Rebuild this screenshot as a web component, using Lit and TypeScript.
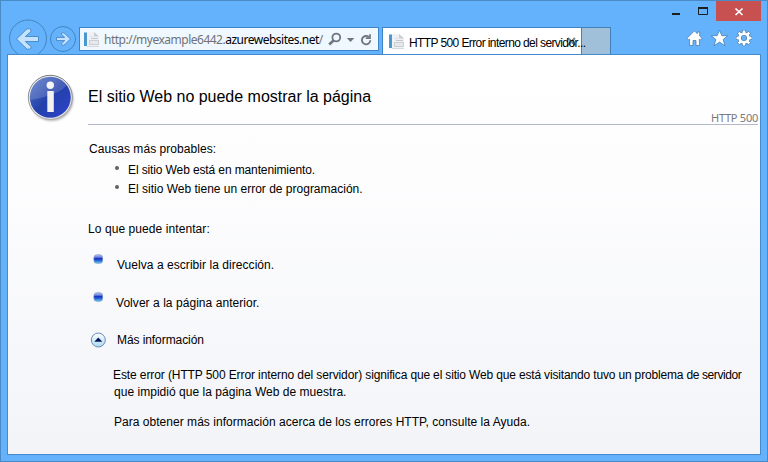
import { LitElement, html, css, svg } from "lit";
import { customElement } from "lit/decorators.js";

const pageIcon = html`<svg class="page-icon" width="17" height="17" viewBox="0 0 17 17">
  <path d="M1 1h10.500l4.500 4v10.500H1z" fill="#f0f1f4"/>
  <path d="M11 1v4.500h5z" fill="#c9ccd1"/>
  <rect x="1" y="1.500" width="3" height="13.500" fill="#4a98cf"/>
  <path d="M7 5.500h3" stroke="#dcdfe3"/>
  <path d="M8 7.500h7" stroke="#c3c6cb"/>
  <rect x="6.500" y="9.500" width="9" height="4" fill="#e6e8eb" stroke="#cbced3"/>
  <path d="M4 15.500h12" stroke="#d5d8dc"/>
</svg>`;

const gearTeeth = [0, 45, 90, 135, 180, 225, 270, 315];

@customElement("app-root")
export class AppRoot extends LitElement {
  static styles = css`
    :host { display: block; }
    * { box-sizing: border-box; }
    svg { display: block; flex: none; }
    .window {
      width: 768px; height: 462px; background: #65b2fc; border: 1px solid #4b8bc5;
      display: flex; flex-direction: column; overflow: hidden;
      font: 12px/16px "Liberation Sans", Arial, sans-serif; color: #000;
    }
    .titlebar { height: 20px; display: flex; justify-content: flex-end; flex: none; margin-right: 6px; }
    .close { width: 45px; height: 20px; background: #c75050; }
    .toolbar { height: 33px; flex: none; display: flex; padding-left: 7px; }
    .nav { margin-top: -2px; height: 35px; overflow: hidden; }
    .address {
      width: 300px; height: 24px; margin: 6px 0 0 1px; border: 1px solid #3d83c5; background: #eff7ff;
      display: flex; align-items: center; color: #6f7379; white-space: nowrap;
      font: 12px/16px "Noto Sans", "Open Sans", sans-serif;
    }
    .address .page-icon { margin-left: 3px; }
    .url { width: 219px; margin-left: 4px; padding-top: 2px; letter-spacing: -0.5px; }
    .url b { font-weight: 400; color: #000; }
    .tab {
      width: 200px; height: 27px; margin: 6px 0 0 3px; background: #fff; border: 1px solid #3d83c5; border-bottom: 0;
      display: flex; padding: 5px 0 0 5px; position: relative; z-index: 1;
    }
    .tab-title { position: absolute; left: 26px; top: 7px; white-space: nowrap; letter-spacing: -0.6px; }
    .tab-x { position: absolute; left: 184px; top: 9px; }
    .newtab { width: 29px; height: 27px; margin-top: 6px; background: #a0bfd9; border: 1px solid #4380b7; border-left: 0; border-bottom: 0; }
    .tools { display: flex; gap: 8px; margin: 8px 0 0 75px; }
    .page {
      margin: 0 6px 6px; width: 754px; height: 401px; border: 1px solid #438bcc; flex: none;
      background: linear-gradient(#fff 0, #fdfdfe 30%, #f3f4f8 100%);
      display: grid; grid-template-columns: 80px 1fr;
    }
    .info { padding: 17px 0 0 17px; }
    .headline { height: 70px; width: 670px; border-bottom: 1px solid #b4b9c9; display: flex; justify-content: space-between; }
    h1 { font-size: 16px; line-height: 20px; font-weight: 400; margin: 32px 0 0; letter-spacing: -0.01px; }
    .code { font: 11px/14px "Noto Sans", sans-serif; color: #77797c; margin-top: 56px; letter-spacing: -0.25px; }
    p, ul { margin: 0; padding: 0; white-space: nowrap; }
    .causes-title { margin: 16px 0 0 1px; letter-spacing: 0.05px; }
    .causes { list-style: none; margin-top: 3px; }
    .causes li { height: 19px; display: flex; align-items: center; padding-left: 27px; }
    .causes li::before { content: ""; width: 4px; height: 4px; margin: 0 9px 4px 0; border-radius: 2px; background: #626262; }
    .c0 { letter-spacing: -0.12px; }
    .try-title { margin-top: 23px; letter-spacing: 0.08px; }
    .row { display: flex; white-space: nowrap; height: 38px; }
    .rows { margin-top: 20px; }
    .row svg { margin: -3px 0 0 5px; }
    .row span { margin-left: 14px; letter-spacing: 0.05px; }
    .row + .row:not(.more) span { margin-left: 13px; }
    .row.more { height: 19px; margin-top: -1px; }
    .row.more svg { margin: 0 0 0 2px; }
    .row.more span { margin-left: 11px; letter-spacing: -0.08px; }
    .detail { margin: 16px 0 0 25px; line-height: 17px; }
    .d1 { letter-spacing: -0.1px; }
    .d1b { letter-spacing: -0.16px; }
    .d1c { letter-spacing: -0.42px; }
    .d2 { margin-left: 1px; letter-spacing: 0.03px; }
    .help { margin: 13px 0 0 26px; letter-spacing: 0.03px; }
  `;

  render() {
    return html`<div class="window">
      <div class="titlebar">
        <svg width="35" height="20" viewBox="0 0 35 20"><path d="M9 13h8" stroke="#1e1e1e" stroke-width="2"/></svg>
        <svg width="18" height="20" viewBox="0 0 18 20"><path d="M0.500 7v6.500h9V7" fill="none" stroke="#1e1e1e"/><path d="M0 7h10" stroke="#1e1e1e" stroke-width="2"/></svg>
        <svg class="close" viewBox="0 0 45 20"><path d="M19.500 7.500l7 6.500m0-6.500l-7 6.500" stroke="#fff" stroke-width="1.700"/></svg>
      </div>
      <div class="toolbar">
        <svg class="nav" width="70" height="35" viewBox="0 0 70 35">
          <g fill="none" stroke="#4385c0"><circle cx="20" cy="19.500" r="18.500"/><circle cx="55" cy="20" r="12.500"/></g>
          <g fill="#c5e3ff" stroke="#4b8dca" stroke-linejoin="round">
            <path d="M8.500 20L19 9.800h2.500l1.500 1v1.700L17.300 17.500H30.500v5H17.300L23 27.500v1.700l-1.500 1H19z"/>
            <path d="M62.500 20l-6.500-6.200h-2l-.8 1.200 3.500 3.400H48.500v3.200H56.700L53.200 25l.8 1.200h2z"/>
          </g>
        </svg>
        <div class="address">${pageIcon}<span class="url">http://myexample6442.<b>azurewebsites.net</b>/</span>
          <svg width="52" height="18" viewBox="0 0 52 18" fill="none" stroke="#70767f">
            <circle cx="13.300" cy="7.500" r="3.900" stroke-width="1.800"/><path d="M10.500 10.500l-4.300 4" stroke-width="2.500"/>
            <path d="M23.800 8h7.500l-3.700 4z" fill="#70767f" stroke="none"/>
            <path d="M45.800 6.900A4.200 4.200 0 1 0 47.300 10.200" stroke-width="1.900"/><path d="M47 4.200v4h-4.200" stroke-width="1.700"/>
          </svg>
        </div>
        <div class="tab">${pageIcon}
          <svg class="tab-x" width="9" height="9" viewBox="0 0 9 9"><path d="M1 1l7 7M8 1L1 8" stroke="#7d858b" stroke-width="2"/></svg>
          <span class="tab-title">HTTP 500 Error interno del servidor...</span>
        </div>
        <div class="newtab"></div>
        <div class="tools">
          <svg width="17" height="18" viewBox="0 0 17 18"><path d="M8.500 1.800L1 9.300l1.600 1.700 1-.8V16.500h3.400v-5h3v5h3.400v-6.300l1 .8L16 9.300l-2.300-2.200V3h-2.400v1.700z" fill="#fff" stroke="#4a7fae" stroke-width=".8"/></svg>
          <svg width="17" height="18" viewBox="0 0 17 18"><path d="M8.500 1l2.300 5.700h6L12.100 10.500l1.900 6.300-5.500-3.700-5.500 3.700 1.900-6.300L.2 6.700h6z" fill="#fff" stroke="#4a7fae" stroke-width=".8"/></svg>
          <svg width="17" height="18" viewBox="0 0 17 18"><g fill="none">
            ${["#4a7fae", "#fff"].map((c, i) => svg`<g stroke=${c}>
              <circle cx="8" cy="9" r="4.400" stroke-width=${4 - i * 1.3}/>
              ${gearTeeth.map((a) => svg`<path d=${i ? "M8 4V1.500" : "M8 4V1"} stroke-width=${3.8 - i * 1.3} transform="rotate(${a} 8 9)"/>`)}
            </g>`)}
          </g></svg>
        </div>
      </div>
      <div class="page">
        <div class="info">
          <svg width="52" height="52" viewBox="0 0 52 52">
            <defs>
              <linearGradient id="b" x1="0" y1="0" x2="1" y2="1"><stop offset="0" stop-color="#5578c5"/><stop offset=".5" stop-color="#2340ab"/><stop offset="1" stop-color="#3044cb"/></linearGradient>
              <linearGradient id="r" x1="0" y1="0" x2="0" y2="1"><stop offset="0" stop-color="#777"/><stop offset="1" stop-color="#aaa"/></linearGradient>
              <filter id="s"><feGaussianBlur stdDeviation="1.200"/></filter>
            </defs>
            <circle cx="26.500" cy="27" r="21.800" fill="#777" opacity=".6" filter="url(#s)"/>
            <circle cx="25.300" cy="25.300" r="22" fill="#eee" stroke="url(#r)"/>
            <circle cx="25.300" cy="25.300" r="20.500" fill="url(#b)"/>
            <path d="M5 28a20.500 20.500 0 0 1 37-15Q34 23 5 28z" fill="#fff" opacity=".16"/>
            <circle cx="25.300" cy="13.300" r="3.700" fill="#f5f5f5"/><rect x="22.300" y="19" width="6.500" height="21" rx=".5" fill="#f2f2f2"/>
          </svg>
        </div>
        <div>
          <div class="headline"><h1>El sitio Web no puede mostrar la página</h1><span class="code">HTTP 500</span></div>
          <p class="causes-title">Causas más probables:</p>
          <ul class="causes"><li><span class="c0">El sitio Web está en mantenimiento.</span></li><li><span>El sitio Web tiene un error de programación.</span></li></ul>
          <p class="try-title">Lo que puede intentar:</p>
          <div class="rows">
            ${["Vuelva a escribir la dirección.", "Volver a la página anterior."].map((t) => html`<div class="row">
              <svg width="10" height="10" viewBox="0 0 10 10"><defs><linearGradient id="g" x2="0" y2="1"><stop offset="0" stop-color="#b8c8f0"/><stop offset=".3" stop-color="#6b82dd"/><stop offset=".45" stop-color="#1732c4"/><stop offset=".6" stop-color="#1e50d0"/><stop offset="1" stop-color="#65d2f5"/></linearGradient></defs><rect x=".8" y=".5" width="9" height="9" rx="3.500" fill="url(#g)" stroke="#8aa0c4" stroke-width=".6"/></svg>
              <span>${t}</span></div>`)}
            <div class="row more">
              <svg width="16" height="16" viewBox="0 0 16 16"><defs><linearGradient id="m" x2="0" y2="1"><stop offset="0" stop-color="#fff"/><stop offset="1" stop-color="#a9d9ef"/></linearGradient></defs><circle cx="8.300" cy="8" r="7" fill="url(#m)" stroke="#6b8cba"/><path d="M4.300 9.700h8L8.300 5.500z" fill="#07125c"/></svg>
              <span>Más información</span></div>
          </div>
          <p class="detail"><span class="d1">Este error (HTTP 500 Error interno del servidor) </span><span class="d1b">significa que el sitio Web que está visitando tuvo un problema </span><span class="d1c">de servidor</span><br><span class="d2">que impidió que la página Web de muestra.</span></p>
          <p class="help">Para obtener más información acerca de los errores HTTP, consulte la Ayuda.</p>
        </div>
      </div>
    </div>`;
  }
}
